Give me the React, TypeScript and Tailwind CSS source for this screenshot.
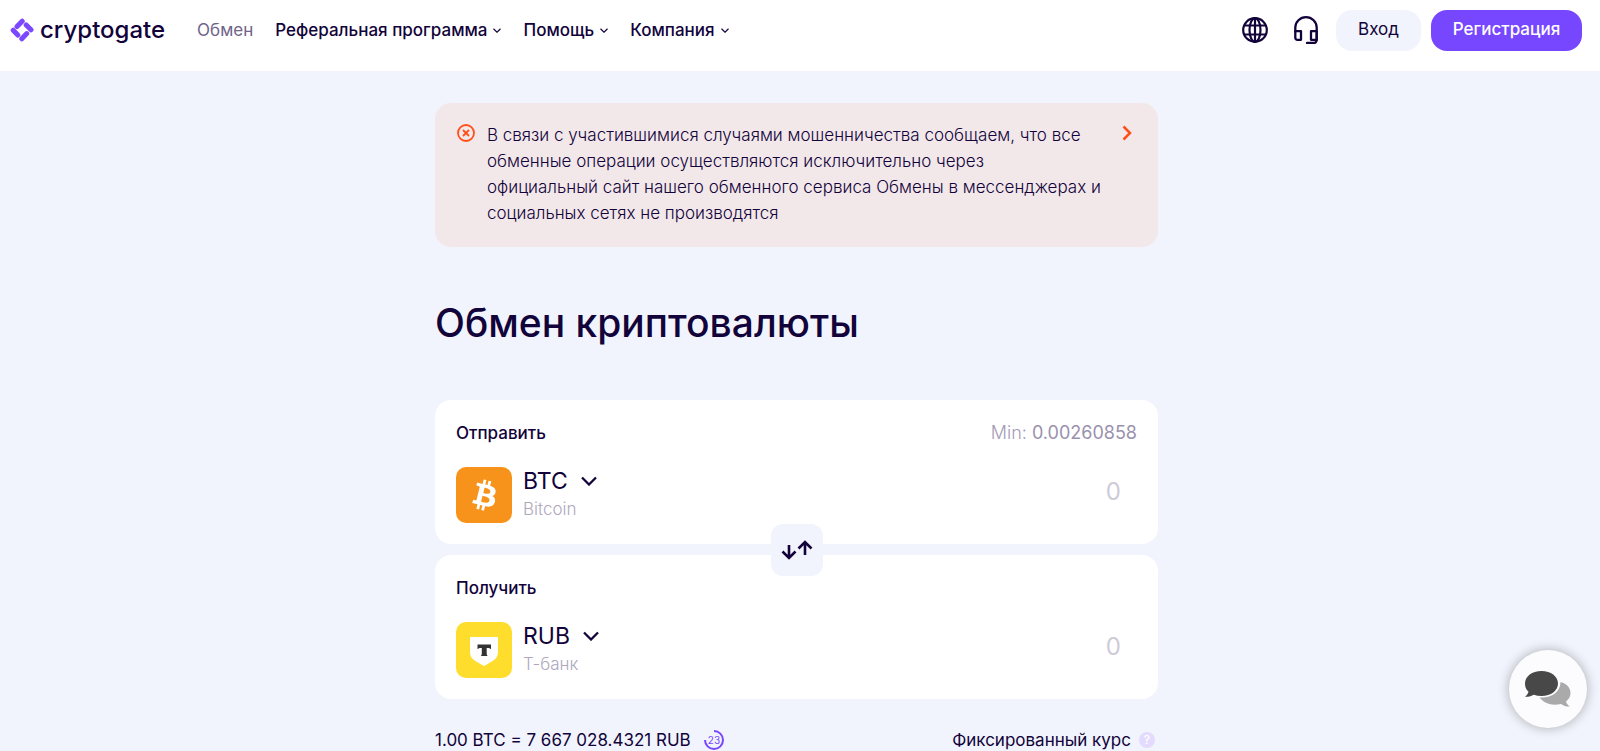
import type { ReactNode } from "react";

function Chevron({ className }: { className: string }) {
  return (
    <svg viewBox="0 0 16 10" fill="none" stroke="currentColor" className={className} aria-hidden="true">
      <path d="M1 1.500 8 8.500l7-7" strokeWidth="2.300" />
    </svg>
  );
}

function Logo() {
  return (
    <a href="#" className="flex items-center gap-1.5 text-[#12033a]">
      <svg viewBox="0 0 24 24" className="size-6" fill="none" stroke="#7b47ff" strokeWidth="5" strokeLinecap="round" aria-hidden="true">
        <path d="M7 8.500 12.200 3.200" />
        <path d="M16.200 7 21 11.800" />
        <path d="M16.800 15.600 11.800 20.800" />
        <path d="M3.200 12.200 7.800 17" />
      </svg>
      <span className="text-[24px] leading-8 font-medium">cryptogate</span>
    </a>
  );
}

function NavItem({ label }: { label: string }) {
  return (
    <button type="button" className="flex cursor-pointer items-center gap-1.5">
      {label}
      <Chevron className="w-2" />
    </button>
  );
}

function GlobeIcon() {
  return (
    <svg viewBox="0 0 26 26" className="size-[26px]" fill="none" stroke="currentColor" strokeWidth="2.200" aria-hidden="true">
      <circle cx="13" cy="13" r="11.800" />
      <ellipse cx="13" cy="13" rx="5.500" ry="11.800" />
      <path d="M13 1v24M2.200 8.500h21.600M2.200 17.500h21.600" />
    </svg>
  );
}

function HeadsetIcon() {
  return (
    <svg viewBox="0 0 24 28" className="h-7 w-6" fill="none" stroke="currentColor" strokeWidth="2.300" strokeLinejoin="round" strokeLinecap="round" aria-hidden="true">
      <path d="M1.300 15.500V11.500a10.700 10.300 0 0 1 21.400 0V24a3 3 0 0 1-3 3H13" />
      <path d="M1.300 15.200H7v8.600H3.300a2 2 0 0 1-2-2zM22.700 15.200H17v8.600h5.700z" />
    </svg>
  );
}

function BitcoinLogo() {
  return (
    <svg viewBox="0 0 56 56" className="size-14" aria-hidden="true">
      <rect width="56" height="56" rx="10" fill="#f7931a" />
      <path
        transform="translate(3.200 3) scale(1.570)"
        fill="#fff"
        d="M23.189 14.02c.314-2.096-1.283-3.223-3.465-3.975l.708-2.84-1.728-.43-.69 2.765c-.454-.114-.92-.22-1.385-.326l.695-2.783L15.596 6l-.708 2.839c-.376-.086-.746-.17-1.104-.26l.002-.009-2.384-.595-.46 1.846s1.283.294 1.256.312c.7.175.826.638.805 1.006l-.806 3.235c.048.012.11.03.18.057l-.183-.045-1.13 4.532c-.086.212-.303.531-.793.41.018.025-1.256-.313-1.256-.313l-.858 1.978 2.25.561c.418.105.828.215 1.231.318l-.715 2.872 1.727.43.708-2.84c.472.127.93.245 1.378.357l-.706 2.828 1.728.43.715-2.866c2.948.558 5.164.333 6.097-2.333.752-2.146-.037-3.385-1.588-4.192 1.13-.26 1.98-1.003 2.207-2.538zm-3.95 5.538c-.533 2.147-4.148.986-5.32.695l.95-3.805c1.172.293 4.929.872 4.37 3.11zm.535-5.569c-.487 1.953-3.495.96-4.47.717l.86-3.45c.975.243 4.118.696 3.61 2.733z"
      />
    </svg>
  );
}

function TBankLogo() {
  return (
    <svg viewBox="0 0 56 56" className="size-14" aria-hidden="true">
      <rect width="56" height="56" rx="10" fill="#ffdd2d" />
      <path d="M14 15h28v14.500c0 5.500-2.500 8-7 10.500l-7 4-7-4c-4.500-2.500-7-5-7-10.500z" fill="#fff" />
      <path d="M21.500 22.500h13.500v4.800c-.8-1-2-1.400-3.500-1.400h-.8v5.300c0 1.300.4 2.200 1 2.900h-6.900c.6-.7 1-1.600 1-2.900v-5.300H25c-1.500 0-2.700.4-3.500 1.400z" fill="#333" />
    </svg>
  );
}

type CurrencyProps = { title: string; code: string; name: string; logo: ReactNode; limit?: ReactNode; id: string };

function CurrencyCard({ title, code, name, logo, limit, id }: CurrencyProps) {
  return (
    <section className="flex flex-col gap-5 rounded-2xl bg-white px-[21px] pt-[19px] pb-[21px]">
      <div className="flex items-center justify-between leading-7">
        <label htmlFor={id} className="text-[17px] font-medium">{title}</label>
        {limit}
      </div>
      <div className="flex items-center justify-between">
        <button type="button" className="flex cursor-pointer items-center gap-[11px] text-left">
          {logo}
          <span className="flex flex-col">
            <span className="flex items-center gap-[13px] text-[23px] leading-7">
              {code}
              <Chevron className="w-4" />
            </span>
            <span className="text-[17px] leading-7 font-light text-[#aea8bd]">{name}</span>
          </span>
        </button>
        <input
          id={id}
          type="text"
          inputMode="decimal"
          placeholder="0"
          className="w-60 bg-transparent pr-4 pb-1.5 text-right text-[24px] leading-8 outline-none placeholder:text-[#cfcad8]"
        />
      </div>
    </section>
  );
}

export default function App() {
  return (
    <div className="min-h-screen overflow-hidden bg-[#f1f4fc] font-['Inter','Noto_Sans',sans-serif] text-[#12033a]">
      <header className="flex h-[71px] items-start justify-between bg-white pt-[10px] pr-[18px] pl-[10px]">
        <div className="flex h-10 items-center gap-8">
          <Logo />
          <nav className="flex items-center gap-[22px] text-[17px] leading-6 font-medium">
            <a href="#" className="font-normal text-[#6f6488]">Обмен</a>
            <NavItem label="Реферальная программа" />
            <NavItem label="Помощь" />
            <NavItem label="Компания" />
          </nav>
        </div>
        <div className="flex h-10 items-center gap-[10px] text-[17px]">
          <div className="mr-2 flex items-center gap-[26px]">
            <button type="button" aria-label="Язык" className="cursor-pointer"><GlobeIcon /></button>
            <button type="button" aria-label="Поддержка" className="cursor-pointer"><HeadsetIcon /></button>
          </div>
          <button type="button" className="h-[41px] w-[85px] cursor-pointer rounded-2xl bg-[#f1f4fc]">Вход</button>
          <button type="button" className="h-[41px] w-[151px] cursor-pointer rounded-2xl bg-[#7747ff] font-medium text-white">Регистрация</button>
        </div>
      </header>

      <main className="flex flex-col items-center pt-8 pr-[23px] pl-4">
        <div className="flex w-full max-w-[723px] flex-col">
          <aside className="flex items-start gap-3 rounded-2xl bg-[#f2e8ea] pt-[19px] pr-[26px] pb-[21px] pl-[22px]">
            <svg viewBox="0 0 18 18" className="mt-0.5 size-[18px] shrink-0" fill="none" stroke="#ff4f18" strokeWidth="1.800" aria-hidden="true">
              <circle cx="9" cy="9" r="8" />
              <path d="m6 6 6 6M12 6l-6 6" />
            </svg>
            <p className="grow text-[17px] leading-[26px] font-light">
              В связи с участившимися случаями мошенничества сообщаем, что все<br />
              обменные операции осуществляются исключительно через<br />
              официальный сайт нашего обменного сервиса Обмены в мессенджерах и<br />
              социальных сетях не производятся
            </p>
            <button type="button" aria-label="Подробнее" className="mt-[3px] cursor-pointer text-[#ff4f18]">
              <svg viewBox="0 0 10 16" className="h-4 w-[10px]" fill="none" stroke="currentColor" strokeWidth="2.500" aria-hidden="true">
                <path d="m1.500 1.500 6.500 6.500-6.500 6.500" />
              </svg>
            </button>
          </aside>

          <h1 className="mt-12 text-[39px] leading-[56px] font-medium">Обмен криптовалюты</h1>

          <div className="relative mt-[49px] flex flex-col gap-[11px]">
            <CurrencyCard
              id="send"
              title="Отправить"
              code="BTC"
              name="Bitcoin"
              logo={<BitcoinLogo />}
              limit={<span className="text-[18px] font-light text-[#a39bb5]">Min: <span className="font-normal text-[#9a91ae]">0.00260858</span></span>}
            />
            <CurrencyCard id="receive" title="Получить" code="RUB" name="Т-банк" logo={<TBankLogo />} />
            <button
              type="button"
              aria-label="Поменять местами"
              className="absolute top-1/2 left-1/2 flex size-[52px] -translate-1/2 cursor-pointer items-center justify-center rounded-xl bg-[#f1f4fc]"
            >
              <svg viewBox="0 0 32 20" className="h-5 w-8" fill="none" stroke="currentColor" strokeWidth="2.600" aria-hidden="true">
                <path d="M8 5v13M1.500 11.500 8 18l6.500-6.500M24 15V2M17.500 8.500 24 2l6.500 6.500" />
              </svg>
            </button>
          </div>

          <div className="mt-[27px] flex items-center justify-between text-[17px] leading-7">
            <div className="flex items-center gap-3">
              1.00 BTC = 7 667 028.4321 RUB
              <svg viewBox="0 0 22 22" className="size-[22px]" role="img" aria-label="23">
                <path d="M11 2a9 9 0 1 1-9 9" fill="none" stroke="#7747ff" strokeWidth="2" />
                <text x="11" y="14.500" textAnchor="middle" fontSize="10" fill="#7747ff">23</text>
              </svg>
            </div>
            <div className="flex items-center gap-2 pr-[3px]">
              Фиксированный курс
              <button type="button" aria-label="Справка" className="size-4 cursor-pointer rounded-full bg-[#e3dbfd] text-[12px] leading-4 font-medium text-white">?</button>
            </div>
          </div>
        </div>
      </main>

      <button
        type="button"
        aria-label="Чат"
        className="fixed right-[13px] bottom-[23px] flex size-[78px] cursor-pointer items-center justify-center rounded-full bg-[#fcfcfe] shadow-[0_0_12px_rgba(0,0,0,0.3)]"
      >
        <svg viewBox="0 0 48 38" className="h-[38px] w-12" aria-hidden="true">
          <path d="M36.500 12c6 1.500 10 5.500 10 11 0 3.800-2 6.500-4.500 8.500.5 2 1.800 3.800 4 5-3.500.2-6.500-.8-9-2.600-9 2.200-17-.4-21.500-6.400 11 1 21-5 21-15.500z" fill="#aaa" />
          <path d="M17.500 1C27 1 34 6.300 34 13.500S27 26 17.500 26c-2.800 0-5.400-.4-7.700-1.200C7.500 26.200 4.500 27 .8 26.800c2-1.300 3.200-3 3.700-5C2 19.600 1 16.800 1 13.500 1 6.300 8 1 17.500 1z" fill="#484848" />
        </svg>
      </button>
    </div>
  );
}
